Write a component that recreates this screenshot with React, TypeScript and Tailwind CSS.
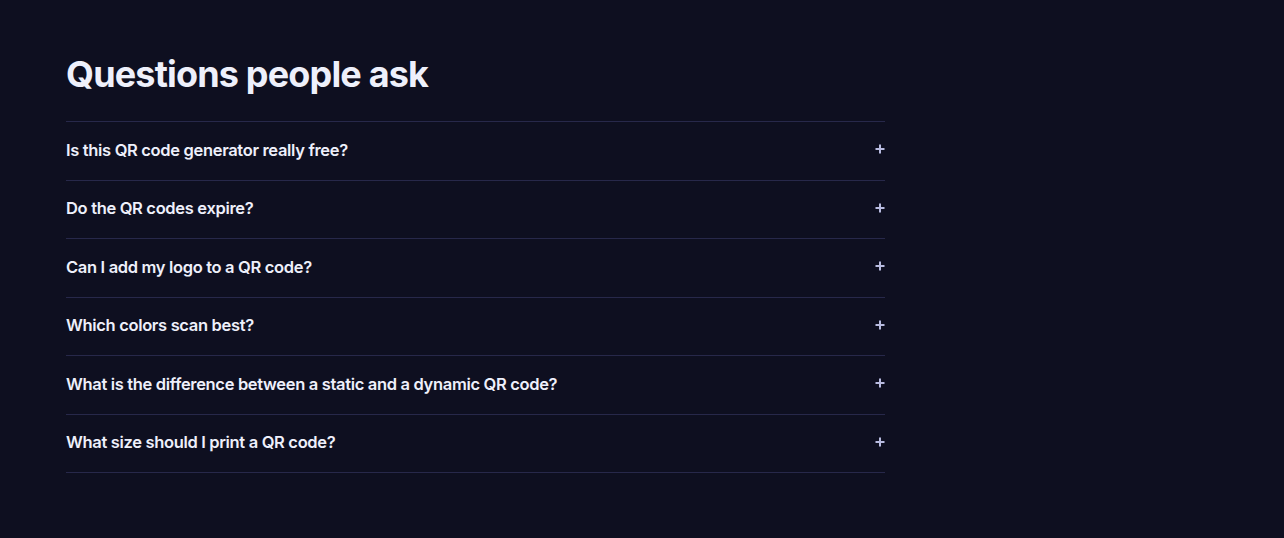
const questions = [
  "Is this QR code generator really free?",
  "Do the QR codes expire?",
  "Can I add my logo to a QR code?",
  "Which colors scan best?",
  "What is the difference between a static and a dynamic QR code?",
  "What size should I print a QR code?",
];

function PlusIcon() {
  return (
    <svg width="10" height="10" viewBox="0 0 10 10" className="text-[#b8bbe0]">
      <path d="M5 0.5v9M0.5 5h9" stroke="currentColor" strokeWidth="2" />
    </svg>
  );
}

export default function App() {
  return (
    <div
      className="min-h-[538px] w-full bg-[#0e0f20] text-[#eceef8]"
      style={{ fontFamily: "Inter, 'Noto Sans', sans-serif" }}
    >
      <section className="px-[66px] pt-[52px]">
        <div className="w-[819px]">
          <h2 className="text-[36px] font-bold leading-[44px] tracking-[-0.023em] text-[#eef0fb]">
            Questions people ask
          </h2>
          <div className="mt-[25px] border-t border-[#27284a]">
            {questions.map((q) => (
              <div
                key={q}
                className="flex h-[58.5px] items-center justify-between border-b border-[#27284a]"
              >
                <span className="-mt-[1px] text-[16.5px] font-semibold tracking-[-0.02em] text-[#eef0fb]">{q}</span>
                <span className="-mt-[3px] flex h-[10px] w-[10px] items-center justify-center">
                  <PlusIcon />
                </span>
              </div>
            ))}
          </div>
        </div>
      </section>
    </div>
  );
}
